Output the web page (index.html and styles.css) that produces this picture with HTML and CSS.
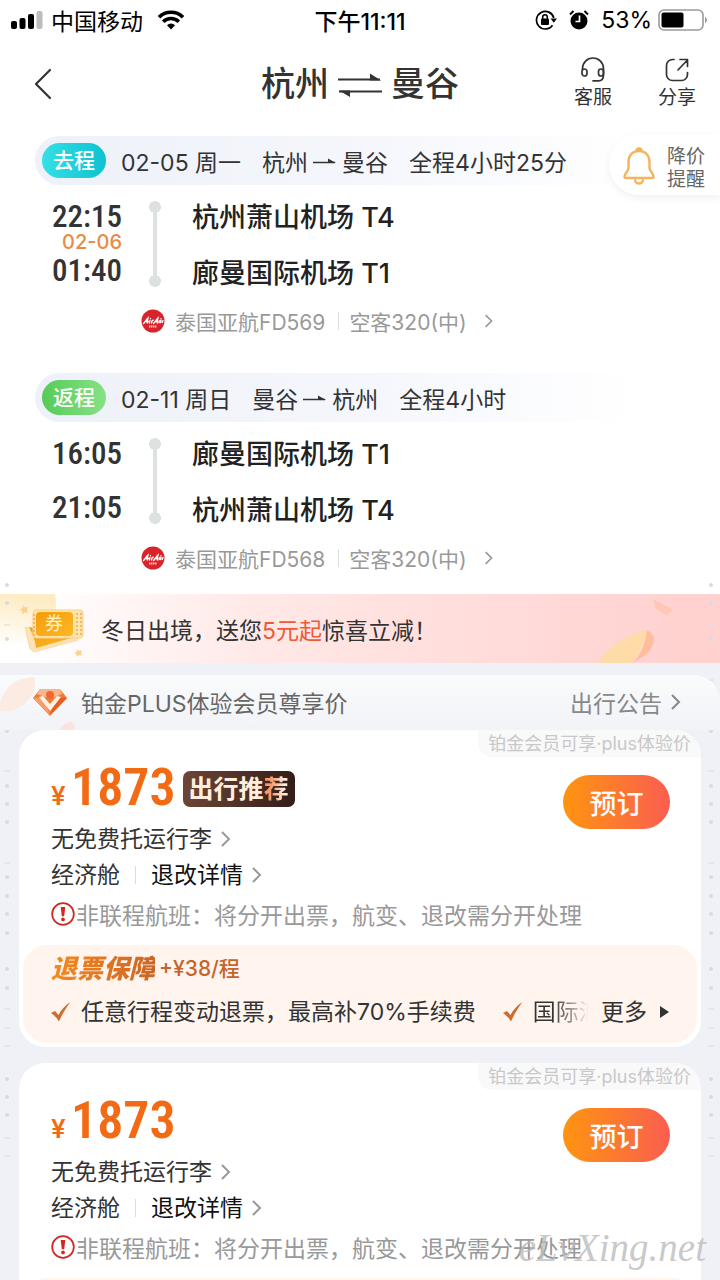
FILE: index.html
```html
<!DOCTYPE html>
<html lang="zh-CN">
<head>
<meta charset="utf-8">
<meta name="viewport" content="width=device-width, initial-scale=1">
<title>杭州 ⇌ 曼谷</title>
<link rel="stylesheet" href="styles.css">
</head>
<body>
<svg class="defs" aria-hidden="true">
  <defs>
    <symbol id="chevron" viewBox="0 0 12 18"><path d="M2 2l7 7-7 7" fill="none" stroke="currentColor" stroke-width="2"/></symbol>
    <symbol id="arrow" viewBox="0 0 24 10"><path d="M0 6.500h22" stroke="currentColor" stroke-width="1.500"/><path d="M15 2.500L23 7h-8z" fill="currentColor"/></symbol>
    <symbol id="airasia" viewBox="0 0 24 24"><circle cx="12" cy="12" r="11.500" fill="#d8232a"/><path d="M2.500 14.500C4 13 5.500 10.500 7 9c-.4 2-.8 3.500-.8 5M4.500 12.500h3M9 11.500l-.6 2.500M9.500 9.500v.2M10.500 14l.6-2.200 1.200-.6M12.500 14.500C14 13 15.500 10.500 17 9c-.4 2-.8 3.500-.8 5M14.500 12.500h2.500M19 11.300c-1.500.5.3 1.700-1 2.500M20 9.700v.2M20 11.500l-.4 2M22 11.500l-.8 2" fill="none" stroke="#fff" stroke-width="1.300" stroke-linecap="round"/><path d="M8 17.500h8" stroke="#f6c6c6" stroke-width="2" stroke-dasharray="1.500 .5"/></symbol>
    <symbol id="check" viewBox="0 0 20 20"><path d="M0 11l4-2 3.500 4C10 8 14 3.500 19.500 0 15 6 11 12.500 8 19.500 6 16 3 13 0 11z" fill="#cf6d2d"/></symbol>
    <symbol id="alert" viewBox="0 0 24 24"><circle cx="12" cy="12" r="10" fill="none" stroke="#d1281f" stroke-width="1.600"/><path d="M9.900 5.500h4.200l-1 8.500h-2.200z" fill="#d1281f"/><circle cx="12" cy="17" r="1.700" fill="#d1281f"/></symbol>
    <symbol id="edge" viewBox="0 0 10 580">
      <g fill="#d8dbe0"><circle cx="5" cy="5" r="2"/><circle cx="5" cy="23" r="2"/><circle cx="5" cy="59" r="2"/><circle cx="5" cy="114" r="2"/><circle cx="5" cy="151" r="2"/><circle cx="5" cy="206" r="2"/><circle cx="5" cy="224" r="2"/><circle cx="5" cy="242" r="2"/><circle cx="5" cy="297" r="2"/><circle cx="5" cy="316" r="2"/><circle cx="5" cy="334" r="2"/><circle cx="5" cy="353" r="2"/><circle cx="5" cy="389" r="2"/><circle cx="5" cy="408" r="2"/><circle cx="5" cy="499" r="2"/><circle cx="5" cy="517" r="2"/><circle cx="5" cy="535" r="2"/></g>
      <path d="M2 45h6M2 100h6M2 136h6M2 191h6M2 283h6M2 429h6M2 448h6M2 466h6M2 558h6M2 576h6" stroke="#d8dbe0" stroke-width="1"/>
    </symbol>
  </defs>
</svg>

<div class="app">
  <div class="status">
    <div class="status-left">
      <svg width="32" height="20" viewBox="0 0 32 20" aria-hidden="true"><rect x="0" y="11" width="6" height="8" rx="2"/><rect x="8.500" y="8" width="6" height="11" rx="2"/><rect x="17" y="4" width="6" height="15" rx="2"/><rect x="25.500" y="1" width="6" height="18" rx="2" fill="#bdbdbd"/></svg>
      <span>中国移动</span>
      <svg class="wifi" width="28" height="20" viewBox="0 0 28 20" aria-hidden="true"><g fill="none" stroke="#000" stroke-width="3.600"><path d="M2 7.200a17 17 0 0 1 24 0"/><path d="M6.200 11.700a11 11 0 0 1 15.600 0"/></g><path d="M10 15.200a5.700 5.700 0 0 1 8 0L14 19.500z"/></svg>
    </div>
    <div class="status-time">下午11:11</div>
    <div class="status-right">
      <svg width="22" height="22" viewBox="0 0 22 22" aria-hidden="true"><path d="M17.500 16.200A8.800 8.800 0 1 1 18.800 9" fill="none" stroke="#000" stroke-width="1.700"/><path d="M15.500 9.500h6.500l-3.200 4.300z"/><rect x="6" y="9.500" width="8" height="6.500" rx="1"/><path d="M7.700 10V8a2.300 2.300 0 0 1 4.600 0v2" fill="none" stroke="#000" stroke-width="1.500"/></svg>
      <svg width="20" height="20" viewBox="0 0 20 20" aria-hidden="true"><circle cx="10" cy="11" r="8.500"/><path d="M1 4.500L4.500 1M19 4.500L15.500 1" stroke="#000" stroke-width="2"/><path d="M10.500 5.500V11.500H6.500" fill="none" stroke="#fff" stroke-width="1.700"/></svg>
      <span>53%</span>
      <svg class="battery" width="51" height="22" viewBox="0 0 51 22" aria-hidden="true"><rect x="1" y="1" width="44" height="20" rx="5" fill="none" stroke="#9a9a9a" stroke-width="1.600"/><rect x="3.500" y="3.500" width="22" height="15" rx="2"/><path d="M47 7.500q4 3.500 0 7z" fill="#9a9a9a"/></svg>
    </div>
  </div>

  <header class="nav">
    <button class="back" type="button" aria-label="返回"><svg width="18" height="32" viewBox="0 0 18 32"><path d="M16 2L2 16l14 14" fill="none" stroke="#333" stroke-width="2.200" stroke-linecap="round" stroke-linejoin="round"/></svg></button>
    <h1 class="route"><span>杭州</span><svg width="44" height="26" viewBox="0 0 44 26" role="img" aria-label="往返"><path d="M0 8.500h42M1 20.500h43" stroke="#333" stroke-width="2"/><path d="M32 2.500l11 7H32zM1 19.500h11V26z" fill="#333"/></svg><span>曼谷</span></h1>
    <div class="actions">
      <button class="action" type="button"><svg width="26" height="26" viewBox="0 0 26 26"><g fill="none" stroke="#333" stroke-width="1.700" stroke-linecap="round"><path d="M2.500 12.500V11.500a10.500 10.500 0 0 1 21 0v6.500c0 3.500-2 5.800-5 5.800h-5.500"/><rect x="2" y="12" width="5" height="7" rx="2.500"/><rect x="18.500" y="12" width="5" height="7" rx="2.500"/></g></svg><span>客服</span></button>
      <button class="action" type="button"><svg width="26" height="26" viewBox="0 0 26 26"><path d="M10 2.500H8.500A6 6 0 0 0 2.500 8.500v9a6 6 0 0 0 6 6h9a6 6 0 0 0 6-6V15.500M14 13L23 3.500M16 2.500h7.500v7" fill="none" stroke="#333" stroke-width="1.700" stroke-linecap="round" stroke-linejoin="round"/></svg><span>分享</span></button>
    </div>
  </header>

  <main>
    <div class="legs">
      <section class="leg">
        <div class="leg-head"><span class="pill pill-out">去程</span><span>02-05 周一</span><span class="cities">杭州<svg width="24" height="10"><use href="#arrow"/></svg>曼谷</span><span>全程4小时25分</span></div>
        <div class="leg-body">
          <div class="times"><time>22:15</time><span class="next-day">02-06</span><time>01:40</time></div>
          <div class="track"></div>
          <div class="stations"><div>杭州萧山机场 T4</div><div>廊曼国际机场 T1</div></div>
        </div>
        <a class="flight" href="#"><svg class="air" width="24" height="24"><use href="#airasia"/></svg><span>泰国亚航FD569</span><i class="bar"></i><span>空客320(中)</span><svg class="chev" width="10" height="16"><use href="#chevron"/></svg></a>
        <button class="alert-btn" type="button"><svg width="36" height="40" viewBox="0 0 36 40"><path d="M18 6C11 6 7.500 11 7.500 17v6c0 3.500-4 5.500-4 8.500 0 1 .7 1.500 1.500 1.500h26c.8 0 1.500-.5 1.500-1.500 0-3-4-5-4-8.500v-6C28.500 11 25 6 18 6zM15.500 6a2.500 2.500 0 0 1 5 0M14 34.500a4 4 0 0 0 8 0" fill="none" stroke="#f3b45c" stroke-width="2.400"/></svg><span class="alert-text">降价<br>提醒</span></button>
      </section>
      <section class="leg">
        <div class="leg-head"><span class="pill pill-back">返程</span><span>02-11 周日</span><span class="cities">曼谷<svg width="24" height="10"><use href="#arrow"/></svg>杭州</span><span>全程4小时</span></div>
        <div class="leg-body">
          <div class="times"><time>16:05</time><span class="next-day"></span><time>21:05</time></div>
          <div class="track"></div>
          <div class="stations"><div>廊曼国际机场 T1</div><div>杭州萧山机场 T4</div></div>
        </div>
        <a class="flight" href="#"><svg class="air" width="24" height="24"><use href="#airasia"/></svg><span>泰国亚航FD568</span><i class="bar"></i><span>空客320(中)</span><svg class="chev" width="10" height="16"><use href="#chevron"/></svg></a>
      </section>
    </div>

    <div class="results">
      <svg class="edge edge-left" width="10" height="580" aria-hidden="true"><use href="#edge"/></svg>
      <svg class="edge edge-right" width="10" height="580" aria-hidden="true"><use href="#edge"/></svg>

      <div class="banner">
        <svg class="banner-art" width="90" height="69" viewBox="0 0 90 69" aria-hidden="true">
          <defs>
            <linearGradient id="tk" x1="0" y1="0" x2="1" y2="1"><stop offset="0" stop-color="#f59b0b"/><stop offset="1" stop-color="#fdb827"/></linearGradient>
            <linearGradient id="glow" x1="0.200" y1="0" x2="0" y2="1"><stop offset="0" stop-color="#fdecc4"/><stop offset="1" stop-color="#fff"/></linearGradient>
          </defs>
          <path d="M0 0h55q4 18-8 34Q30 52 0 52z" fill="url(#glow)"/>
          <path d="M23 11l2 2.500 3-.5-1 3 1 3-3-.7-2.500 2-.2-3-2.800-1.500 3-1.500zM77 55l2 2 3-.5-1 3 1 2-3-.5-2 2-.5-3-2.500-1 3-1.500z" fill="#fbd28c"/>
          <path d="M25 33l46 10 7 0v3l-44 12-4-3z" fill="#ffe3b8" stroke="#fbd9a5"/>
          <path d="M29 33l46 10-39 11q-1-10-7-21z" fill="url(#tk)"/>
          <rect x="33" y="16" width="50" height="28" rx="3" fill="#ffe5a9" stroke="#f9cf87"/>
          <rect x="36" y="18" width="37" height="24" rx="4" fill="url(#tk)"/>
          <path d="M77 19v23M81 19v23M34 20v22" stroke="#eda95a" stroke-width="1.500" stroke-dasharray="2 2"/>
          <text x="54" y="36" text-anchor="middle" class="coupon">券</text>
        </svg>
        <p>冬日出境，送您<b>5元起</b>惊喜立减！</p>
        <svg class="confetti" width="90" height="69" viewBox="0 0 90 69" aria-hidden="true"><path d="M0 69Q16 44 49 36 47 55 33 69z" fill="#ffdba8"/><path d="M49 36q14 7 0 24l-14 9Q47 57 49 36z" fill="#ffbd9e"/><path d="M55 5l20 10-6 7-12-8z" fill="#ffc8b6"/></svg>
      </div>

      <div class="notice">
        <svg class="petal" width="80" height="55" viewBox="0 0 80 55" aria-hidden="true"><path d="M0 28Q8 2 35 2 37 20 22 31 12 38 0 36z" fill="#fcebe3"/><path d="M60 55q4-9 12-8 4 3 2 8z" fill="#fbe4de"/></svg>
        <svg class="gem" width="36" height="32" viewBox="0 0 36 32" aria-hidden="true"><path d="M8 3h20l7 9-17 18L1 12z" fill="#f07a36"/><path d="M8 3h20l2 5-12 5L5 8z" fill="#fbb58b"/><path d="M1 12l10-1 7 18z" fill="#f69d6a"/><path d="M35 12l-10-1-7 18z" fill="#e35e24"/><path d="M11 10l7 8 7-8 4 1-11 14L7 11z" fill="#fff2e5"/><circle cx="18" cy="9" r="4" fill="#ef6a32"/></svg>
        <p>铂金PLUS体验会员尊享价</p>
        <a class="more-notice" href="#">出行公告<svg width="12" height="18"><use href="#chevron"/></svg></a>
      </div>

      <article class="card">
        <div class="tag">铂金会员可享·plus体验价</div>
        <div class="top">
          <div class="info">
            <div class="price"><small>¥</small><strong>1873</strong><span class="rec">出行推<em>荐</em></span></div>
            <a class="row" href="#">无免费托运行李<svg width="12" height="18"><use href="#chevron"/></svg></a>
            <div class="row">经济舱<i class="bar"></i><a class="row dark" href="#">退改详情<svg width="12" height="18"><use href="#chevron"/></svg></a></div>
          </div>
          <button class="book" type="button">预订</button>
        </div>
        <div class="warn"><svg width="26" height="26"><use href="#alert"/></svg><span>非联程航班：将分开出票，航变、退改需分开处理</span></div>
        <div class="promo">
          <div class="promo-title"><b>退票保障</b><span>+¥38/程</span></div>
          <div class="perks">
            <svg width="20" height="20"><use href="#check"/></svg><span class="perk">任意行程变动退票，最高补70%手续费</span>
            <svg width="20" height="20"><use href="#check"/></svg><span class="perk fade">国际汇</span>
            <button class="more" type="button">更多<svg width="9" height="12" viewBox="0 0 9 12"><path d="M0 0l9 6-9 6z" fill="#333"/></svg></button>
          </div>
        </div>
      </article>

      <article class="card">
        <div class="tag">铂金会员可享·plus体验价</div>
        <div class="top">
          <div class="info">
            <div class="price"><small>¥</small><strong>1873</strong></div>
            <a class="row" href="#">无免费托运行李<svg width="12" height="18"><use href="#chevron"/></svg></a>
            <div class="row">经济舱<i class="bar"></i><a class="row dark" href="#">退改详情<svg width="12" height="18"><use href="#chevron"/></svg></a></div>
          </div>
          <button class="book" type="button">预订</button>
        </div>
        <div class="warn"><svg width="26" height="26"><use href="#alert"/></svg><span>非联程航班：将分开出票，航变、退改需分开处理</span></div>
        <div class="promo"></div>
      </article>
    </div>
  </main>
  <div class="watermark">eLvXing.net</div>
</div>
</body>
</html>
```
FILE: styles.css
```css
* { box-sizing: border-box; }
body, p, h1 { margin: 0; font-weight: 400; }
body {
  font-family: Inter, "Noto Sans CJK SC", sans-serif;
  font-size: 23px;
  color: #333;
  background: #eff1f6;
}
button { border: 0; padding: 0; background: none; font: inherit; color: inherit; cursor: pointer; }
a { color: inherit; text-decoration: none; }
svg { flex: none; }
.defs { position: absolute; width: 0; height: 0; }

.app { position: relative; height: 100vh; overflow: hidden; background: #eff1f6; }

/* Status bar */
.status {
  display: grid;
  grid-template-columns: 1fr auto 1fr;
  align-items: center;
  height: 40px;
  padding: 0 11px;
  background: #fff;
  color: #000;
}
.status-left, .status-right { display: flex; align-items: center; }
.status-left { gap: 8px; }
.wifi { margin-left: 6px; }
.status-right { justify-content: flex-end; gap: 12px; }
.status-time { font-weight: 500; }
.battery { margin-left: -6px; }

/* Title bar */
.nav {
  display: grid;
  grid-template-columns: 1fr auto 1fr;
  align-items: center;
  height: 88px;
  padding: 0 24px;
  background: #fff;
}
.back { justify-self: start; display: flex; padding-left: 10px; }
.route {
  display: flex;
  align-items: center;
  gap: 9px;
  font-size: 34px;
  line-height: 48px;
  font-weight: 500;
}
.actions { justify-self: end; display: flex; gap: 46px; }
.action { display: flex; flex-direction: column; align-items: center; gap: 2px; font-size: 19px; line-height: 26px; }

/* Flight legs */
.legs {
  display: flex;
  flex-direction: column;
  gap: 34px;
  padding: 8px 0 18px 35px;
  background: #fff;
}
.leg { position: relative; }
.leg-head {
  display: flex;
  align-items: center;
  gap: 21px;
  height: 49px;
  padding-left: 7px;
  border-radius: 25px 0 0 25px;
  background: linear-gradient(90deg, #eef1f9, #f5f7fc 50%, #fff 88%);
}
.pill {
  margin-right: -6px;
  padding: 0 11px;
  border-radius: 18px;
  font-size: 21px;
  line-height: 35px;
  font-weight: 500;
  color: #fff;
}
.pill-out { background: linear-gradient(90deg, #35dfe6, #0fc2cf); }
.pill-back { background: linear-gradient(90deg, #56cb59, #86e285); }
.cities { display: flex; align-items: center; gap: 5px; }
.leg-body {
  display: grid;
  grid-template-columns: 87px 12px 1fr;
  column-gap: 27px;
  margin-top: 5px;
}
.times {
  display: flex;
  flex-direction: column;
  align-items: flex-end;
  padding-top: 12px;
  font: 500 31px/30px "Roboto Condensed", "Liberation Sans Narrow", sans-serif;
}
.next-day { height: 24px; font: 500 20px/20px Inter, sans-serif; color: #e98a45; }
.track {
  margin: 11px 0 15px;
  background:
    radial-gradient(circle at 6px 6px, #dde1e2 6px, transparent 6px) top / 12px 12px no-repeat,
    radial-gradient(circle at 6px 6px, #dde1e2 6px, transparent 6px) bottom / 12px 12px no-repeat,
    linear-gradient(#dde1e2, #dde1e2) center / 4px 76px no-repeat;
}
.stations { padding-left: 4px; font-size: 27px; line-height: 56px; font-weight: 500; color: #222; }
.flight { display: flex; align-items: center; height: 37px; padding-left: 106px; font-size: 21px; color: #999; }
.air { margin-right: 10px; }
.bar { width: 1px; height: 18px; background: #ddd; }
.flight .bar { margin: 0 10px 0 13px; }
.chev { margin-left: 17px; }
.alert-btn {
  position: absolute;
  top: -2px;
  right: 0;
  display: flex;
  align-items: center;
  gap: 10px;
  height: 61px;
  padding: 0 15px 0 12px;
  border-radius: 31px 0 0 31px;
  background: #fff;
  box-shadow: 0 3px 8px #0000000f;
  font-size: 19px;
  line-height: 23px;
  color: #666;
}
.alert-text { padding-top: 6px; }

/* Results */
.results { position: relative; }
.edge { position: absolute; top: -14px; }
.edge-left { left: 2px; }
.edge-right { right: 4px; }
.banner {
  display: flex;
  align-items: center;
  gap: 11px;
  height: 69px;
  background: linear-gradient(90deg, #fff 5%, #ffe9e7 35%, #ffd2d0 95%);
}
.banner b { font-weight: 400; color: #ee5a35; }
.confetti { margin: 0 32px 0 auto; }
.coupon { font-size: 18px; fill: #fff4cf; }
.notice {
  position: relative;
  display: flex;
  align-items: center;
  height: 55px;
  margin-top: 12px;
  padding: 0 38px 2px 32px;
  border-radius: 0 26px 0 0;
  background: linear-gradient(#fafbfc, #f1f3f7);
  color: #666;
}
.petal { position: absolute; left: 0; top: 0; }
.gem { position: relative; margin-right: 13px; }
.more-notice { display: flex; align-items: center; gap: 8px; margin-left: auto; color: #888; }

.card {
  position: relative;
  display: flex;
  flex-direction: column;
  margin: 0 19px 16px;
  padding-bottom: 4px;
  border-radius: 26px;
  background: #fff;
}
.tag {
  align-self: flex-end;
  padding: 0 10px;
  border-radius: 0 26px 0 14px;
  background: #f9f9fa;
  font-size: 18px;
  line-height: 27px;
  color: #c8c8c8;
}
.top { display: flex; justify-content: space-between; padding: 5px 31px 0 32px; }
.price { display: flex; align-items: baseline; height: 59px; line-height: 52px; color: #f26a14; }
.price small { width: 20px; font-size: 26px; font-weight: 600; }
.price strong { font: 600 52px/52px "Roboto Condensed", "Liberation Sans Narrow", sans-serif; }
.rec {
  align-self: flex-start;
  margin: 9px 0 0 7px;
  padding: 0 6px;
  border-radius: 7px;
  background: linear-gradient(90deg, #6d4536, #331d18);
  font-size: 25px;
  line-height: 36px;
  font-weight: 700;
  color: #ffeede;
}
.rec em { font-style: normal; background: linear-gradient(90deg, #f79a68 30%, #ffeede 80%); -webkit-background-clip: text; background-clip: text; color: transparent; }
.row { display: flex; align-items: center; line-height: 36px; }
.row svg { margin-left: 8px; color: #999; }
.row .bar { margin: 0 15px; }
.dark { color: #111; }
.book {
  width: 107px;
  height: 54px;
  margin-top: 13px;
  border-radius: 27px;
  background: linear-gradient(90deg, #ff9410, #fa5e50);
  font-size: 27px;
  font-weight: 500;
  color: #fff;
}
.warn { display: flex; align-items: center; height: 42px; margin-bottom: 10px; padding-left: 31px; color: #999; white-space: nowrap; }
.promo { min-height: 98px; margin: 0 4px; padding: 8px 28px 11px; border-radius: 24px; background: #fff5ee; }
.promo-title { display: flex; align-items: center; gap: 4px; line-height: 32px; font-size: 21px; font-weight: 500; color: #c5642b; }
.promo-title b {
  font-size: 26px;
  font-weight: 900;
  font-style: italic;
  background: linear-gradient(90deg, #f58a1f, #cc6425);
  -webkit-background-clip: text;
  background-clip: text;
  color: transparent;
}
.perks { display: flex; align-items: center; margin-top: 7px; line-height: 40px; white-space: nowrap; }
.perk { margin: 0 27px 0 10px; }
.fade { flex: 0 1 56px; min-width: 0; margin-right: 9px; overflow: hidden; background: linear-gradient(90deg, #333 35%, #fff5ee); -webkit-background-clip: text; background-clip: text; color: transparent; }
.more { display: flex; align-items: center; gap: 13px; margin-left: auto; }

.watermark {
  position: absolute;
  right: 14px;
  bottom: 10px;
  font: italic 39px/44px "Liberation Serif", serif;
  color: #bbbc;
}
```
